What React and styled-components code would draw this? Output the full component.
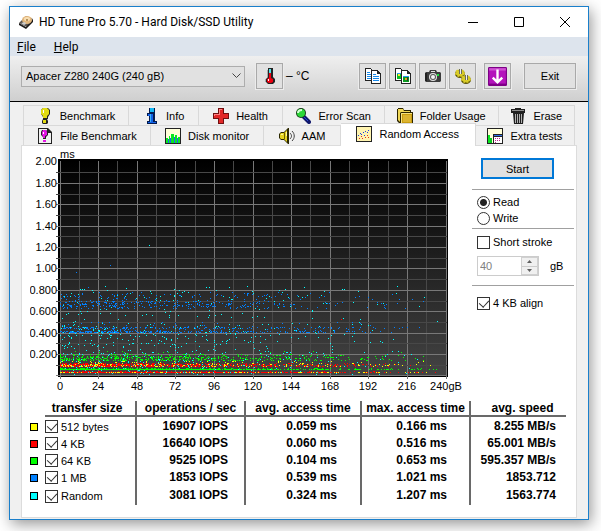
import { useState } from "react";
import styled, { createGlobalStyle, css } from "styled-components";

const GlobalStyle = createGlobalStyle`
  * {
    box-sizing: border-box;
  }
  body {
    margin: 0;
    background-color: #fff;
    color: #000;
    font-family: "Liberation Sans", Arial, sans-serif;
    font-size: 11px;
  }
  button, input, select {
    font: inherit;
    color: inherit;
  }
`;

const Window = styled.div`
  margin: 6px 12px 11px 9px;
  border: 1px solid #1a7fcb;
  background-color: #f0f0f0;
  box-shadow: 2px 4px 14px rgba(0, 0, 0, 0.42);
`;

const TitleBar = styled.header`
  display: flex;
  align-items: center;
  height: 30px;
  padding-left: 8px;
  background-color: #fff;
`;

const Title = styled.h1`
  flex: 1;
  margin: 0 0 0 5px;
  font-family: Roboto, "Open Sans", sans-serif;
  font-size: 12px;
  font-weight: 400;
  white-space: nowrap;
`;

const CaptionButton = styled.button`
  display: flex;
  align-items: center;
  justify-content: center;
  width: 46px;
  height: 30px;
  padding: 0;
  border: 0;
  background: none;
`;

const MenuBar = styled.nav`
  display: flex;
  gap: 18px;
  height: 19px;
  padding: 0 7px;
  background-color: #dde4ed;
`;

const MenuItem = styled.a`
  color: #000;
  font-family: Roboto, "Open Sans", sans-serif;
  font-size: 12px;
  line-height: 20px;
  text-decoration: none;
`;

const Toolbar = styled.div`
  display: flex;
  align-items: center;
  gap: 3px;
  padding: 7px 12px 12px 11px;
  border-bottom: 1px solid #000;
  background: linear-gradient(#efefef, #cfcfcf);
`;

const DriveBox = styled.div`
  display: grid;
  flex: 0 1 224px;
  align-items: center;
  margin-right: 8px;
`;

const DriveSelect = styled.select`
  grid-area: 1 / 1;
  width: 100%;
  height: 21px;
  padding: 0 20px 0 4px;
  border: 1px solid #adadad;
  border-radius: 0;
  background-color: #e1e1e1;
  appearance: none;
`;

const SelectArrow = styled.svg`
  grid-area: 1 / 1;
  justify-self: end;
  margin-right: 4px;
  pointer-events: none;
`;

const ToolButton = styled.button`
  display: flex;
  align-items: center;
  justify-content: center;
  width: ${(props) => (props.$wide ? "52px" : "27px")};
  height: 26px;
  padding: 0;
  border: 1px solid #a9a9a9;
  background-color: #e1e1e1;
  box-shadow: 0 0 0 1px #ececec;
`;

const Temperature = styled.span`
  font-size: 12px;
  white-space: nowrap;
`;

const ToolGroup = styled.div`
  display: flex;
  gap: 3px;
  margin-left: auto;
`;

const Spacer = styled.span`
  width: ${(props) => props.$size};
`;

const Content = styled.main`
  padding: 3px 11px 1px;
`;

const TabRow = styled.div`
  display: flex;
  margin: 0 2px;
  border-left: 1px solid #d9d9d9;
`;

const Tab = styled.button`
  display: flex;
  flex: ${(props) => props.$grow} 1 0;
  align-items: center;
  justify-content: center;
  gap: 7px;
  height: 20px;
  padding: 0;
  border: 1px solid #d9d9d9;
  border-width: 1px 1px 0 0;
  background-color: #f0f0f0;
  white-space: nowrap;
  ${(props) =>
    props.$active &&
    css`
      position: relative;
      height: 23px;
      margin: -2px 0 -1px;
      padding-bottom: 3px;
      background-color: #fff;
    `}
`;

const Panel = styled.section`
  padding: 2px 2px 12px 8px;
  border: 1px solid #dcdcdc;
  background-color: #fff;
`;

const Split = styled.div`
  display: grid;
  grid-template-columns: minmax(0, 1fr) 102px;
`;

const Chart = styled.svg`
  display: block;
  width: 100%;
`;

const Side = styled.div`
  display: flex;
  flex-direction: column;
  padding-top: 10px;
`;

const StartButton = styled.button`
  width: 73px;
  height: 21px;
  margin: 0 0 10px 9px;
  padding: 0;
  border: 2px solid #0078d7;
  background-color: #e1e1e1;
`;

const Group = styled.div`
  display: flex;
  flex-direction: column;
  gap: ${(props) => props.$gap || "0"};
  padding: ${(props) => props.$pad};
  border-top: 1px solid #a0a0a0;
`;

const Option = styled.label`
  display: flex;
  align-items: center;
  gap: 3px;
  height: ${(props) => (props.$compact ? "15px" : "16px")};
  white-space: nowrap;
`;

const Radio = styled.input.attrs({ type: "radio" })`
  flex: none;
  width: 13px;
  height: 13px;
  margin: 0;
  border: 1px solid #333;
  border-radius: 50%;
  background-color: #fff;
  appearance: none;
  &:checked {
    background-image: radial-gradient(circle, #222 3px, transparent 4px);
  }
`;

const Check = styled.input.attrs({ type: "checkbox" })`
  display: grid;
  flex: none;
  justify-content: center;
  width: 13px;
  height: 13px;
  margin: 0;
  border: 1px solid #333;
  background-color: #fff;
  appearance: none;
  &:checked::after {
    content: "";
    width: 5px;
    height: 8px;
    border: solid #333;
    border-width: 0 1px 1px 0;
    transform: rotate(42deg);
  }
`;

const SpinRow = styled.div`
  display: flex;
  align-items: center;
  gap: 11px;
`;

const SpinBox = styled.div`
  display: flex;
  width: 62px;
  height: 20px;
  border: 1px solid #ccc;
`;

const SpinInput = styled.input`
  flex: 1;
  min-width: 0;
  padding: 0 2px;
  border: 0;
  background-color: #fff;
  color: #808080;
`;

const SpinButtons = styled.div`
  display: grid;
  width: 17px;
  border: 1px solid #d0d0d0;
`;

const SpinButton = styled.button`
  display: flex;
  align-items: center;
  justify-content: center;
  padding: 0;
  border: 0;
  background-color: #f0f0f0;
  & + & {
    border-top: 1px solid #ccc;
  }
`;

const TableWrap = styled.div`
  padding: 3px 8px 0 0;
`;

const Table = styled.table`
  width: 100%;
  border-spacing: 0;
  table-layout: fixed;
  font-size: 12px;
  font-weight: 700;
  line-height: 14px;
  white-space: nowrap;
`;

const HeadCell = styled.th`
  height: 16px;
  padding: 0;
  border-bottom: 2px solid #696969;
  &:not(:last-child) {
    border-right: 2px solid #696969;
  }
  &:nth-child(2) {
    padding-right: 6px;
  }
  &:last-child {
    padding-left: 8px;
  }
`;

const CornerCell = styled.td`
  padding: 0;
`;

const Row = styled.tr`
  height: 17px;
  &:last-child {
    height: 20px;
  }
`;

const SizeCell = styled.th`
  padding: 2px 0 0;
  border-right: 2px solid #696969;
  font-size: 11px;
  font-weight: 400;
  text-align: left;
`;

const ValueCell = styled.td`
  padding: 0 ${(props) => props.$right} 0 0;
  text-align: right;
  &:not(:last-child) {
    border-right: 2px solid #696969;
  }
`;

const SwatchCell = styled.td`
  padding: 2px 0 0;
`;

const Swatch = styled.span`
  display: block;
  width: 8px;
  height: 8px;
  border: 1px solid #000;
  background-color: ${(props) => props.$color};
`;

const Icon = ({ children, size = 16, ...rest }) => (
  <svg width={size} height={size} viewBox="0 0 16 16" aria-hidden="true" {...rest}>
    {children}
  </svg>
);

const AppIcon = () => (
  <Icon>
    <path d="M1 9 8 2l7 3-6 8z" fill="#5a524c" />
    <path d="m1 9 7 4v2L1 11zM8 13l7-8v3l-7 7z" fill="#1c1a1a" />
    <ellipse cx="9" cy="6" rx="5" ry="4" fill="#e2b67c" />
    <ellipse cx="9" cy="5" rx="3" ry="2" fill="#f8dfb4" />
    <circle cx="9" cy="6" r="1" fill="#a07840" />
    <path d="m3 9 4-1 1 2-2 1z" fill="#ccc" />
  </Icon>
);

const ThermoIcon = () => (
  <Icon>
    <path d="M6 0h5v9l2 2v3l-2 2H6l-2-2v-3l2-2z" fill="#222" />
    <path d="M7 1h2v4H7z" fill="#4de3e8" />
    <path d="M7 5h2v5l2 1v3l-2 1H7l-2-1v-3l2-1z" fill="#ee0010" />
    <path d="M6 11h1v2H6z" fill="#fff" />
    <path d="M5 2h1v7H5zM3 11h1v3H3z" fill="#aaa" />
  </Icon>
);

const CopyIcon = () => (
  <Icon shapeRendering="crispEdges">
    <path d="M0 0h6v1h1v1h1v1h1v10H0z" fill="#222" />
    <path d="M1 1h5v3h2v8H1z" fill="#fff" />
    <path d="M2 4h3v1H2zM2 6h5v1H2zM2 8h5v1H2zM2 10h5v1H2z" fill="#1689ea" />
    <path d="M6 2h7v1h1v1h1v1h1v11H6z" fill="#222" />
    <path d="M7 3h5v3h3v9H7z" fill="#fff" />
    <path d="M8 6h3v1H8zM8 8h6v1H8zM8 10h6v1H8zM8 12h6v1H8z" fill="#1689ea" />
  </Icon>
);

const CopyImageIcon = () => (
  <Icon shapeRendering="crispEdges">
    <path d="M0 0h6v1h1v1h1v1h1v10H0z" fill="#222" />
    <path d="M1 1h5v3h2v8H1z" fill="#fff" />
    <path d="M2 5h5v6H2z" fill="#0bbb20" />
    <path d="M2 5h5v1H2z" fill="#2899ee" />
    <path d="M3 6h2v2H3z" fill="#ffe23a" />
    <path d="M6 2h7v1h1v1h1v1h1v11H6z" fill="#222" />
    <path d="M7 3h5v3h3v9H7z" fill="#fff" />
    <path d="M8 8h6v6H8z" fill="#0b9b20" />
    <path d="M8 8h6v1H8z" fill="#2899ee" />
    <path d="M10 10h2v2h-2z" fill="#e4a020" />
    <path d="M12 9h1v4h-1z" fill="#333" />
  </Icon>
);

const CameraIcon = () => (
  <Icon>
    <path d="M1 4h3l1-2h6l1 2h3l1 1v8l-1 1H1l-1-1V5z" fill="#3c3c3c" />
    <path d="M6 3h4v1H6z" fill="#ddd" />
    <path d="M0 5h2v8H0z" fill="#222" />
    <circle cx="8" cy="9" r="4" fill="#e4e4e4" />
    <circle cx="8" cy="9" r="3" fill="#555" />
    <circle cx="8" cy="9" r="2" fill="#f4f4f4" />
    <path d="M12 6h2v2h-2z" fill="#19e03a" />
  </Icon>
);

const GearIcon = () => (
  <Icon>
    <ellipse cx="5" cy="6" rx="5" ry="4" fill="#5c5408" />
    <ellipse cx="5" cy="5" rx="4" ry="3" fill="#d9cc28" stroke="#d9cc28" strokeWidth="2" strokeDasharray="2 1" />
    <ellipse cx="11" cy="12" rx="5" ry="4" fill="#5c5408" />
    <ellipse cx="11" cy="11" rx="4" ry="3" fill="#d9cc28" stroke="#d9cc28" strokeWidth="2" strokeDasharray="2 1" />
    <path d="M4 1h3v5H4zM10 7h3v5h-3z" fill="#6a6a5a" />
    <path d="M5 1h1v5H5zM11 7h1v5h-1z" fill="#eee" />
  </Icon>
);

const DownIcon = () => (
  <Icon size={19}>
    <rect x="0" y="0" width="16" height="16" rx="1" fill="#7d0086" />
    <path d="M1 1h14v13H1z" fill="#b414bc" />
    <path d="M1 1h14v2H1z" fill="#cf50d4" />
    <path d="M8 2v10M4 9l4 4 4-4" fill="none" stroke="#fff" strokeWidth="2" />
  </Icon>
);

const BangShape = ({ fill }) => (
  <>
    <path d="M6 0h5l2 2v4l-2 3v2H6V9L4 6V2z" fill="#222" />
    <path d="M6 0h4l2 2v4l-2 2v2H6V8L4 6V2z" fill={fill} />
    <path d="M6 2h1v3H6z" fill="#fff" />
    <path d="M6 11h4l1 2v2l-1 1H6l-1-1v-2z" fill="#222" />
    <path d="M6 12h3v3H6z" fill={fill} />
  </>
);

const BenchmarkIcon = () => (
  <Icon>
    <BangShape fill="#e2dc14" />
  </Icon>
);

const FileBenchmarkIcon = () => (
  <Icon>
    <path d="M1 0h10l4 4v12H1z" fill="#222" />
    <path d="M2 1h8v4h4v10H2z" fill="#f0f0f0" />
    <path d="M5 2h4l2 2v3l-2 2v2H6V9L4 7V4z" fill="#222" />
    <path d="M6 2h3l1 2v3L8 8v2H6V8L5 7V4zM6 12h3v2H6z" fill="#e413e4" />
    <path d="M6 4h1v2H6z" fill="#fff" />
  </Icon>
);

const InfoIcon = () => (
  <Icon>
    <path d="M6 0h6v5H6zM4 5h8v8h2v3H4v-3h2V8H4z" fill="#041c50" />
    <path d="M7 0h4v4H7z" fill="#16b8f4" />
    <path d="M5 6h5v8h3v1H5v-1h2V8H5z" fill="#1262e8" />
    <path d="M7 6h1v8H7z" fill="#3cb4f8" />
  </Icon>
);

const HealthIcon = () => (
  <Icon>
    <path d="M5 0h6v5h5v6h-5v5H5v-5H0V5h5z" fill="#701010" />
    <path d="M6 1h4v5h5v4h-5v5H6v-5H1V6h5z" fill="#e22828" />
    <path d="M6 1h3v1H7v5H2v1H1V6h5z" fill="#ff8080" />
  </Icon>
);

const ScanIcon = () => (
  <Icon>
    <path d="m9 9 5 5" stroke="#10186c" strokeWidth="4" strokeLinecap="round" />
    <path d="m9 9 4 4" stroke="#2848d0" strokeWidth="1" />
    <circle cx="6" cy="5" r="5" fill="#173d17" />
    <circle cx="6" cy="5" r="4" fill="#2cd838" />
    <path d="M3 5c0-2 2-3 4-3" fill="none" stroke="#d6ffd6" strokeWidth="2" />
  </Icon>
);

const FolderIcon = () => (
  <Icon>
    <path d="M0 1h1V0h5l1 2h7v2h2v12H3L0 13z" fill="#2c2400" />
    <path d="M1 1h5l1 2h6v1H4L3 5v9l-2-2z" fill="#f0d858" />
    <path d="M4 5h11v10H4z" fill="#c89c10" />
    <path d="M4 5h11v1H5v9H4z" fill="#f8e480" />
    <path d="M6 7h8v7H6z" fill="#dcb430" />
  </Icon>
);

const EraseIcon = () => (
  <Icon>
    <path d="M5 0h6v1h4v4h-1l-1 11H4L3 5H1V1h4z" fill="#202020" />
    <path d="M2 2h12v1H2z" fill="#909090" />
    <path d="M5 6h1v9H5zM7 6h1v9H7zM9 6h1v9H9zM11 6h1v9h-1z" fill="#b0b0b0" />
  </Icon>
);

const MonitorIcon = () => (
  <Icon shapeRendering="crispEdges">
    <path d="M0 0h16v16H0z" fill="#222" />
    <path d="M1 1h14v14H1z" fill="#ffffd8" />
    <path d="M1 10h2v5H1zM4 8h1v7H4zM6 6h3v9H6zM10 7h2v8h-2zM13 9h2v6h-2z" fill="#08e820" />
    <path d="M3 11h1v4H3zM5 10h1v5H5zM9 9h1v6H9zM12 10h1v5h-1z" fill="#2060f0" />
  </Icon>
);

const SpeakerIcon = () => (
  <Icon>
    <path d="M0 6l2-2h3l4-4h1v16H9l-4-4H2l-2-2z" fill="#2c2800" />
    <path d="M1 6l1-1h3l3-3v12l-3-3H2l-1-1z" fill="#e6d420" />
    <path d="M5 5h1v6H5z" fill="#6c6000" />
    <path d="M2 6h2v1H2zM7 4h1v4H7z" fill="#fff8a0" />
    <path d="M11 5c2 2 2 4 0 6M13 3c3 3 3 7 0 10" fill="none" stroke="#444" />
  </Icon>
);

const ScatterIcon = () => (
  <Icon shapeRendering="crispEdges">
    <path d="M0 0h16v16H0z" fill="#222" />
    <path d="M1 1h14v14H1z" fill="#fff4b0" />
    <path d="M2 9h1v1H2zM4 7h1v1H4zM5 8h1v1H5zM7 6h1v1H7zM9 5h1v1H9zM11 6h1v1h-1zM12 4h1v1h-1zM8 9h1v1H8z" fill="#2040e0" />
    <path d="M3 12h1v1H3zM5 10h1v1H5zM6 12h1v1H6zM9 11h1v1H9zM11 9h1v1h-1zM12 11h1v1h-1z" fill="#e83020" />
  </Icon>
);

const ExtraIcon = () => (
  <Icon shapeRendering="crispEdges">
    <path d="M0 0h16v16H0z" fill="#222" />
    <path d="M1 1h14v14H1z" fill="#ffffd8" />
    <path d="M1 7h2v8H1z" fill="#08e820" />
    <path d="M3 10h2v5H3z" fill="#08c820" />
    <path d="M6 6h10v10H6z" fill="#222" />
    <path d="M7 9h8v6H7z" fill="#fff" />
    <path d="M7 7h8v1H7z" fill="#3070e8" />
    <path d="M8 10h1v1H8zM10 10h1v1h-1zM12 10h1v1h-1zM8 12h1v1H8zM10 12h1v1h-1zM12 12h1v1h-1zM8 14h1v1H8z" fill="#c02890" />
  </Icon>
);

const topTabs = [
  { label: "Benchmark", grow: 105, icon: BenchmarkIcon },
  { label: "Info", grow: 70, icon: InfoIcon },
  { label: "Health", grow: 83, icon: HealthIcon },
  { label: "Error Scan", grow: 102, icon: ScanIcon },
  { label: "Folder Usage", grow: 114, icon: FolderIcon },
  { label: "Erase", grow: 76, icon: EraseIcon },
];

const bottomTabs = [
  { label: "File Benchmark", grow: 127, icon: FileBenchmarkIcon },
  { label: "Disk monitor", grow: 113, icon: MonitorIcon },
  { label: "AAM", grow: 76, icon: SpeakerIcon },
  { label: "Random Access", grow: 135, icon: ScatterIcon, active: true },
  { label: "Extra tests", grow: 99, icon: ExtraIcon },
];

const results = [
  { size: "512 bytes", color: "#ffff00", values: ["16907 IOPS", "0.059 ms", "0.166 ms", "8.255 MB/s"] },
  { size: "4 KB", color: "#ff0000", values: ["16640 IOPS", "0.060 ms", "0.516 ms", "65.001 MB/s"] },
  { size: "64 KB", color: "#00ff00", values: ["9525 IOPS", "0.104 ms", "0.653 ms", "595.357 MB/s"] },
  { size: "1 MB", color: "#0080ff", values: ["1853 IOPS", "0.539 ms", "1.021 ms", "1853.712"] },
  { size: "Random", color: "#00ffff", values: ["3081 IOPS", "0.324 ms", "1.207 ms", "1563.774"] },
];

const headings = ["transfer size", "operations / sec", "avg. access time", "max. access time", "avg. speed"];
const columnWidths = [15, 92, 109, 116, 109, 95];
const valuePadding = ["16px", "23px", "22px", "10px"];

// plot geometry, in viewBox units
const gridX = [30, 49, 68, 87, 107, 126, 145, 165, 184, 203, 223, 242, 261, 280, 300, 319, 338, 358, 377, 396, 416];
const gridY = [13, 24, 35, 46, 56, 67, 78, 88, 99, 110, 120, 131, 142, 153, 163, 174, 185, 195, 206, 217, 227];
const yLabels = ["2.00", "1.80", "1.60", "1.40", "1.20", "1.00", "0.800", "0.600", "0.400", "0.200"];
const xLabels = ["0", "24", "48", "72", "96", "120", "144", "168", "192", "216", "240gB"];

function makeRandom(seed) {
  let s = seed;
  return () => {
    s = (s * 1664525 + 1013904223) % 4294967296;
    return s / 4294967296;
  };
}

// every band: rows from..to, chance of a dot at the left edge, how fast it thins out
const bands = [
  { color: "#0080ff", from: 144, to: 152, p: 0.06, fade: 1.1 },
  { color: "#0080ff", from: 153, to: 158, p: 0.24, fade: 1.4 },
  { color: "#0080ff", from: 159, to: 160, p: 0.12, fade: 1.3 },
  { color: "#0080ff", from: 179, to: 180, p: 0.4, fade: 1 },
  { color: "#0080ff", from: 181, to: 182, p: 0.08, fade: 1.2 },
  { color: "#0080ff", from: 183, to: 184, p: 0.5, fade: 1 },
  { color: "#0080ff", from: 174, to: 178, p: 0.03, fade: 1 },
  { color: "#00ff00", from: 206, to: 208, p: 0.26, fade: 1.1 },
  { color: "#00ff00", from: 209, to: 212, p: 0.42, fade: 1.1 },
  { color: "#00ff00", from: 203, to: 205, p: 0.03, fade: 1 },
  { color: "#00ff00", from: 220, to: 220, p: 0.4, fade: 1 },
  { color: "#00ff00", from: 221, to: 221, p: 1.4, fade: 0.9 },
  { color: "#ff0000", from: 215, to: 215, p: 0.4, fade: 1.1 },
  { color: "#ff0000", from: 216, to: 218, p: 0.9, fade: 1.3 },
  { color: "#ff0000", from: 223, to: 223, p: 0.4, fade: 1.3 },
  { color: "#ff0000", from: 224, to: 224, p: 1.5, fade: 0.9 },
  { color: "#ffff00", from: 213, to: 215, p: 0.12, fade: 1 },
  { color: "#ffff00", from: 216, to: 218, p: 0.22, fade: 0.7 },
  { color: "#ffff00", from: 224, to: 224, p: 0.35, fade: 0.4 },
  { color: "#00ffff", from: 138, to: 174, p: 0.018, fade: 0.9 },
  { color: "#00ffff", from: 175, to: 226, p: 0.042, fade: 1 },
];

const strays = [
  { color: "#00ffff", x: 119, y: 97 },
  { color: "#0080ff", x: 80, y: 117 },
  { color: "#0080ff", x: 46, y: 124 },
  { color: "#0080ff", x: 58, y: 139 },
  { color: "#00ffff", x: 366, y: 145 },
  { color: "#ff0000", x: 311, y: 171 },
];

function bandPath(band, seed) {
  const random = makeRandom(seed);
  let d = "";
  for (let y = band.from; y <= band.to; y++) {
    for (let x = 30; x < 412; x++) {
      const left = 1 - (x - 30) / 386;
      if (random() < band.p * Math.pow(left, band.fade)) {
        d += `M${x} ${y}h1v1h-1z`;
      }
    }
  }
  return d;
}

const dotPaths = bands.map((band, i) => ({ color: band.color, d: bandPath(band, 977 * (i + 3)) }));

function AccessChart() {
  return (
    <Chart viewBox="0 0 442 250" role="img" aria-label="Access time by position">
      <defs>
        <linearGradient id="plot" x1="0" y1="0" x2="0" y2="1">
          <stop offset="0" stopColor="#000" />
          <stop offset="1" stopColor="#444" />
        </linearGradient>
      </defs>
      <g shapeRendering="crispEdges">
        <rect x="28" y="11" width="390" height="218" fill="#000" />
        <rect x="30" y="13" width="387" height="215" fill="url(#plot)" />
        {gridX.map((x, i) => (
          <rect key={x} x={x} y="13" width="1" height={i % 2 ? 215 : 218} fill={i % 2 ? "#484848" : "#787878"} />
        ))}
        {gridY.slice(1).map((y, i) => (
          <rect key={y} x="26" y={y} width="391" height="1" fill={i % 2 ? "#787878" : "#484848"} />
        ))}
        {dotPaths.map((p, i) => (
          <path key={i} d={p.d} fill={p.color} />
        ))}
        {strays.map((p) => (
          <rect key={p.x} x={p.x} y={p.y} width="1" height="1" fill={p.color} />
        ))}
      </g>
      <text x="30" y="10" fontSize="11">
        ms
      </text>
      {yLabels.map((label, i) => (
        <text key={label} x="27" y={gridY[i * 2] + 4} fontSize="11" textAnchor="end">
          {label}
        </text>
      ))}
      {xLabels.map((label, i) => (
        <text key={label} x={gridX[i * 2]} y="242" fontSize="11" textAnchor="middle">
          {label}
        </text>
      ))}
    </Chart>
  );
}

function Tabs({ items }) {
  return (
    <TabRow role="tablist">
      {items.map(({ label, grow, icon: TabIcon, active }) => (
        <Tab key={label} type="button" role="tab" aria-selected={!!active} $grow={grow} $active={active}>
          <TabIcon />
          {label}
        </Tab>
      ))}
    </TabRow>
  );
}

function ResultTable() {
  return (
    <TableWrap>
      <Table>
        <colgroup>
          {columnWidths.map((w, i) => (
            <col key={i} style={{ width: `${(w / 536) * 100}%` }} />
          ))}
        </colgroup>
        <thead>
          <tr>
            <CornerCell />
            {headings.map((heading) => (
              <HeadCell key={heading} scope="col">
                {heading}
              </HeadCell>
            ))}
          </tr>
        </thead>
        <tbody>
          {results.map((row) => (
            <Row key={row.size}>
              <SwatchCell>
                <Swatch $color={row.color} />
              </SwatchCell>
              <SizeCell scope="row">
                <Option $compact>
                  <Check defaultChecked />
                  {row.size}
                </Option>
              </SizeCell>
              {row.values.map((value, i) => (
                <ValueCell key={i} $right={valuePadding[i]}>
                  {value}
                </ValueCell>
              ))}
            </Row>
          ))}
        </tbody>
      </Table>
    </TableWrap>
  );
}

function SideControls() {
  const [mode, setMode] = useState("read");
  return (
    <Side>
      <StartButton type="button">Start</StartButton>
      <Group $pad="4px 5px 2px">
        <Option>
          <Radio name="mode" checked={mode === "read"} onChange={() => setMode("read")} />
          Read
        </Option>
        <Option>
          <Radio name="mode" checked={mode === "write"} onChange={() => setMode("write")} />
          Write
        </Option>
      </Group>
      <Group $pad="5px 5px 9px" $gap="6px">
        <Option>
          <Check />
          Short stroke
        </Option>
        <SpinRow>
          <SpinBox>
            <SpinInput type="text" aria-label="Short stroke size" defaultValue="40" disabled />
            <SpinButtons>
              <SpinButton type="button" aria-label="Increase" disabled>
                <svg width="5" height="3">
                  <path d="M0 3h5L2.500 0z" fill="#606060" />
                </svg>
              </SpinButton>
              <SpinButton type="button" aria-label="Decrease" disabled>
                <svg width="5" height="3">
                  <path d="M0 0h5L2.500 3z" fill="#606060" />
                </svg>
              </SpinButton>
            </SpinButtons>
          </SpinBox>
          gB
        </SpinRow>
      </Group>
      <Group $pad="9px 5px">
        <Option>
          <Check defaultChecked />4 KB align
        </Option>
      </Group>
    </Side>
  );
}

function App() {
  return (
    <>
      <GlobalStyle />
      <Window>
        <TitleBar>
          <AppIcon />
          <Title>HD Tune Pro 5.70 - Hard Disk/SSD Utility</Title>
          <CaptionButton type="button" aria-label="Minimize">
            <svg width="10" height="10">
              <path d="M0 5.500h10" stroke="#000" />
            </svg>
          </CaptionButton>
          <CaptionButton type="button" aria-label="Maximize">
            <svg width="10" height="10">
              <path d="M.5 .5h9v9h-9z" fill="none" stroke="#000" />
            </svg>
          </CaptionButton>
          <CaptionButton type="button" aria-label="Close">
            <svg width="10" height="10">
              <path d="m0 0 10 10M10 0 0 10" stroke="#000" />
            </svg>
          </CaptionButton>
        </TitleBar>
        <MenuBar>
          <MenuItem href="#file">
            <u>F</u>ile
          </MenuItem>
          <MenuItem href="#help">
            <u>H</u>elp
          </MenuItem>
        </MenuBar>
        <Toolbar>
          <DriveBox>
            <DriveSelect aria-label="Drive">
              <option>Apacer Z280 240G (240 gB)</option>
            </DriveSelect>
            <SelectArrow width="9" height="6">
              <path d="m.5 .5 4 4 4-4" fill="none" stroke="#444" />
            </SelectArrow>
          </DriveBox>
          <ToolButton type="button" aria-label="Temperature">
            <ThermoIcon />
          </ToolButton>
          <Temperature>– °C</Temperature>
          <ToolGroup>
            <ToolButton type="button" aria-label="Copy text">
              <CopyIcon />
            </ToolButton>
            <ToolButton type="button" aria-label="Copy image">
              <CopyImageIcon />
            </ToolButton>
            <ToolButton type="button" aria-label="Save screenshot">
              <CameraIcon />
            </ToolButton>
            <ToolButton type="button" aria-label="Options">
              <GearIcon />
            </ToolButton>
            <Spacer $size="2px" />
            <ToolButton type="button" aria-label="Minimize to tray">
              <DownIcon />
            </ToolButton>
            <Spacer $size="7px" />
            <ToolButton type="button" $wide>
              Exit
            </ToolButton>
          </ToolGroup>
        </Toolbar>
        <Content>
          <Tabs items={topTabs} />
          <Tabs items={bottomTabs} />
          <Panel>
            <Split>
              <AccessChart />
              <SideControls />
            </Split>
            <ResultTable />
          </Panel>
        </Content>
      </Window>
    </>
  );
}

export default App;
